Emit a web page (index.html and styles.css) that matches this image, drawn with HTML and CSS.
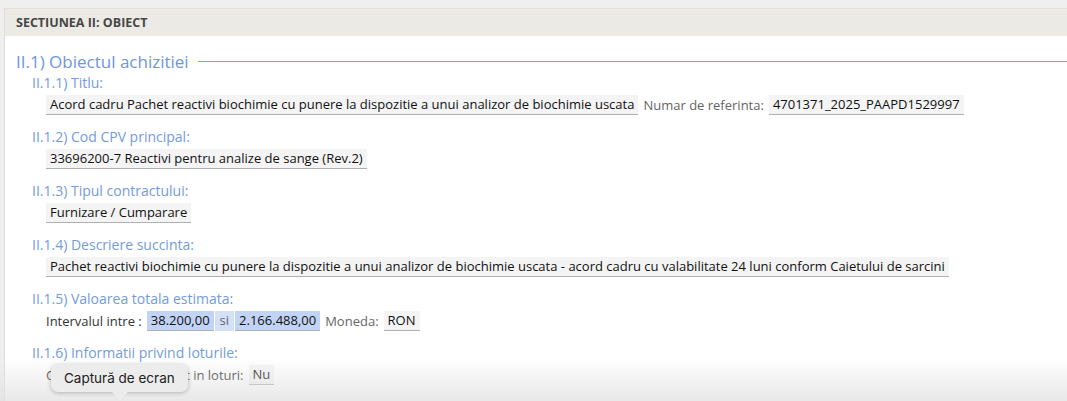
FILE: index.html
```html
<!DOCTYPE html>
<html lang="ro">
<head>
<meta charset="utf-8">
<link rel="stylesheet" href="styles.css">
</head>
<body>
<div class="panel">
  <div class="panel-head">SECTIUNEA II: OBIECT</div>
  <div class="panel-body">
    <div class="section-title"><span>II.1) Obiectul achizitiei</span><span class="rule"></span></div>

    <div class="field">
      <div class="label">II.1.1) Titlu:</div>
      <div class="row">
        <span class="val">Acord cadru Pachet reactivi biochimie cu punere la dispozitie a unui analizor de biochimie uscata</span>
        <span class="inline-label">Numar de referinta:</span>
        <span class="val">4701371_2025_PAAPD1529997</span>
      </div>
    </div>

    <div class="field">
      <div class="label">II.1.2) Cod CPV principal:</div>
      <div class="row"><span class="val">33696200-7 Reactivi pentru analize de sange (Rev.2)</span></div>
    </div>

    <div class="field">
      <div class="label">II.1.3) Tipul contractului:</div>
      <div class="row"><span class="val">Furnizare / Cumparare</span></div>
    </div>

    <div class="field">
      <div class="label">II.1.4) Descriere succinta:</div>
      <div class="row"><span class="val">Pachet reactivi biochimie cu punere la dispozitie a unui analizor de biochimie uscata - acord cadru cu valabilitate 24 luni conform Caietului de sarcini</span></div>
    </div>

    <div class="field">
      <div class="label">II.1.5) Valoarea totala estimata:</div>
      <div class="row">
        <span class="plain">Intervalul intre :</span>
        <span class="val sel">38.200,00</span><span class="val sel-light">si</span><span class="val sel">2.166.488,00</span>
        <span class="inline-label">Moneda:</span>
        <span class="val">RON</span>
      </div>
    </div>

    <div class="field">
      <div class="label">II.1.6) Informatii privind loturile:</div>
      <div class="row">
        <span class="plain">Contractul este impartit in loturi:</span>
        <span class="val">Nu</span>
      </div>
    </div>

    <div class="section-title sub"><span>II.2) Descriere</span><span class="rule"></span></div>
  </div>
</div>
<div class="fade"></div>
<div class="tooltip">Captură de ecran</div>
</body>
</html>
```

FILE: styles.css
```css
html, body {
  margin: 0;
  padding: 0;
}
body {
  background: #efefef;
  padding: 8px 0 0 4px;
  height: 401px;
  box-sizing: border-box;
  overflow: hidden;
  font-family: "Open Sans", "Liberation Sans", sans-serif;
}
.panel {
  background: #fff;
  border-left: 1px solid #dcdcdc;
  border-top: 1px solid #e0e0e0;
  height: 100%;
}
.panel-head {
  background: #ebeae4;
  height: 27px;
  line-height: 27px;
  padding-left: 11px;
  font-size: 12.5px;
  font-weight: 700;
  color: #474747;
}
.panel-body {
  padding: 13px 0 0 11px;
}
.section-title {
  display: flex;
  align-items: center;
  gap: 9px;
  height: 24px;
  font-size: 17px;
  color: #6d96de;
}
.section-title .rule {
  flex: 1;
  height: 1px;
  background: #7aa0dc;
}
.section-title.sub {
  margin-top: 8px;
}
.field {
  padding-left: 16px;
  margin-bottom: 12px;
}
.label {
  font-size: 14px;
  line-height: 20px;
  height: 20px;
  color: #739be0;
}
.row {
  display: flex;
  align-items: center;
  margin-top: 2px;
  padding-left: 14px;
  height: 20px;
  font-size: 13px;
}
.val {
  display: inline-block;
  background: #f4f4f4;
  border-bottom: 1px solid #b0b0b0;
  padding: 0 4px;
  line-height: 19px;
  color: #111;
}
.val.sel {
  background: #c2d4f6;
}
.val.sel-light {
  background: #d3e0f8;
  border-bottom-color: #d3e0f8;
  color: #666;
  margin: 0 1px;
  padding: 0 5px;
}
.inline-label {
  color: #666;
  margin: 0 5px 0 5px;
}
.plain {
  color: #333;
  margin-right: 5px;
}
.fade {
  position: absolute;
  left: 0;
  right: 0;
  bottom: 0;
  height: 44px;
  background: linear-gradient(to bottom, rgba(235,235,235,0), rgba(225,225,225,0.75));
  pointer-events: none;
}
.tooltip {
  position: absolute;
  left: 51px;
  top: 364px;
  padding: 0 13px;
  height: 28px;
  line-height: 28px;
  border-radius: 7px;
  background: #ececec;
  box-shadow: 0 1px 4px rgba(0,0,0,0.25);
  font-family: "Inter", "Liberation Sans", sans-serif;
  font-size: 13.5px;
  color: #222;
}
.tooltip::after {
  content: "";
  position: absolute;
  left: 61px;
  bottom: -8px;
  border-left: 8px solid transparent;
  border-right: 8px solid transparent;
  border-top: 8px solid #ececec;
}
```
